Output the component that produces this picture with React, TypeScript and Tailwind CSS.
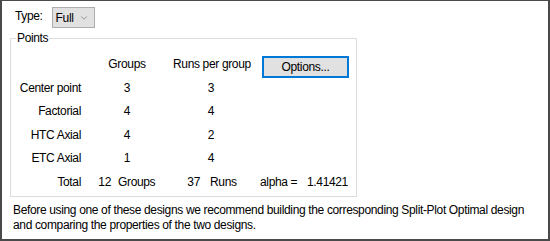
import { ChevronDown } from 'lucide-react'

const rows = [
    { label: 'Center point', groups: '3', runs: '3' },
    { label: 'Factorial', groups: '4', runs: '4' },
    { label: 'HTC Axial', groups: '4', runs: '2' },
    { label: 'ETC Axial', groups: '1', runs: '4' },
]

const App = () => {
    return (
        <div
            className="w-[550px] h-[241px] bg-white text-black text-[12px] tracking-[-0.35px] whitespace-nowrap border-t border-l-2 border-r-2 border-b-2 border-[#4a4a4a] overflow-hidden"
            style={{ fontFamily: '"Liberation Sans", Arial, sans-serif' }}
        >
            {/* Type selector */}
            <div className="flex items-center h-[21px] mt-[6px] pl-[13px]">
                <span className="-mt-[4px]">Type:</span>
                <div className="ml-[9px] w-[43px] h-[21px] flex items-center justify-between pl-[3px] pr-[5px] bg-[#e1e1e1] border border-[#adadad]">
                    <span>Full</span>
                    <ChevronDown className="h-[10px] w-[10px] text-[#666]" strokeWidth={1.5} />
                </div>
            </div>

            {/* Points group box */}
            <fieldset className="ml-[8px] mt-[3px] w-[347px] h-[166px] border border-[#dcdcdc] px-0">
                <legend className="ml-[5px] px-[1px] leading-[14px]">Points</legend>

                <div className="flex items-center h-[25px] mt-[6px]">
                    <div className="w-[70px]" />
                    <div className="w-[92px] text-center">Groups</div>
                    <div className="w-[76px] text-center">Runs per group</div>
                    <button className="self-start ml-[13px] mt-[5px] w-[87px] h-[22px] bg-[#e1e1e1] border-2 border-[#0078d7] flex items-center justify-center">
                        Options...
                    </button>
                </div>

                {rows.map((row) => (
                    <div key={row.label} className="flex items-center h-[23.5px]">
                        <div className="w-[70px] text-right">{row.label}</div>
                        <div className="w-[92px] text-center">{row.groups}</div>
                        <div className="w-[76px] text-center">{row.runs}</div>
                    </div>
                ))}

                {/* Totals */}
                <div className="flex items-center h-[23.5px]">
                    <div className="w-[70px] text-right">Total</div>
                    <div className="w-[30px] text-right">12</div>
                    <div className="ml-[7px] w-[59px]">Groups</div>
                    <div className="w-[23px] text-right">37</div>
                    <div className="ml-[10px] w-[50px]">Runs</div>
                    <div className="w-[47px]">alpha =</div>
                    <div>1.41421</div>
                </div>
            </fieldset>

            <p className="mt-[6px] pl-[11px] leading-[14.5px]">
                Before using one of these designs we recommend building the corresponding Split-Plot Optimal design
                <br />
                and comparing the properties of the two designs.
            </p>
        </div>
    )
}

export default App
